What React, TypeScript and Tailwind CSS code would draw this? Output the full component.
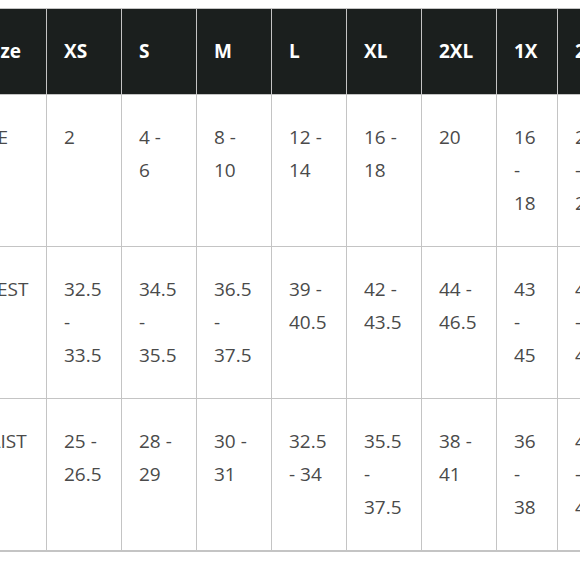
import React from "react";

const cols = ["XS", "S", "M", "L", "XL", "2XL", "1X", "2X"];
const widths = ["w-[75px]", "w-[75px]", "w-[75px]", "w-[75px]", "w-[75px]", "w-[75px]", "w-[61px]", "w-[61px]"];
const rows: { label: string; vals: string[] }[] = [
  { label: "SIZE", vals: ["2", "4 - 6", "8 - 10", "12 - 14", "16 - 18", "20", "16 - 18", "20 - 22"] },
  { label: "CHEST", vals: ["32.5 - 33.5", "34.5 - 35.5", "36.5 - 37.5", "39 - 40.5", "42 - 43.5", "44 - 46.5", "43 - 45", "46 - 48"] },
  { label: "WAIST", vals: ["25 - 26.5", "28 - 29", "30 - 31", "32.5 - 34", "35.5 - 37.5", "38 - 41", "36 - 38", "40 - 42"] },
];

export default function App() {
  return (
    <div className="w-[580px] h-[580px] overflow-hidden bg-white" style={{ fontFamily: '"Open Sans", sans-serif' }}>
      <table className="mt-2 ml-[-44px] table-fixed border-collapse border-b-2 border-b-[#c4c4c4] text-[19px] leading-[33px] w-[662px]">
        <colgroup>
          <col className="w-[90px]" />
          {widths.map((w, i) => (
            <col key={i} className={w} />
          ))}
        </colgroup>
        <thead>
          <tr className="bg-[#1b1f1e] text-white">
            <th className="border border-[#c4c4c4] pl-[17px] pr-[25px] py-[26px] text-right font-bold">Size</th>
            {cols.map((c) => (
              <th key={c} className="border border-[#c4c4c4] pl-[17px] pr-[4px] py-[26px] text-left font-bold">
                {c}
              </th>
            ))}
          </tr>
        </thead>
        <tbody>
          {rows.map((r) => (
            <tr key={r.label}>
              <td className="border border-[#c4c4c4] pl-[14px] pr-[4px] py-[26px] align-top text-[#4a4a4a] h-[151px]">{r.label}</td>
              {r.vals.map((v, i) => (
                <td key={i} className="border border-[#c4c4c4] pl-[17px] pr-[22px] py-[26px] align-top text-[#4a4a4a]">
                  {v}
                </td>
              ))}
            </tr>
          ))}
        </tbody>
      </table>
    </div>
  );
}
